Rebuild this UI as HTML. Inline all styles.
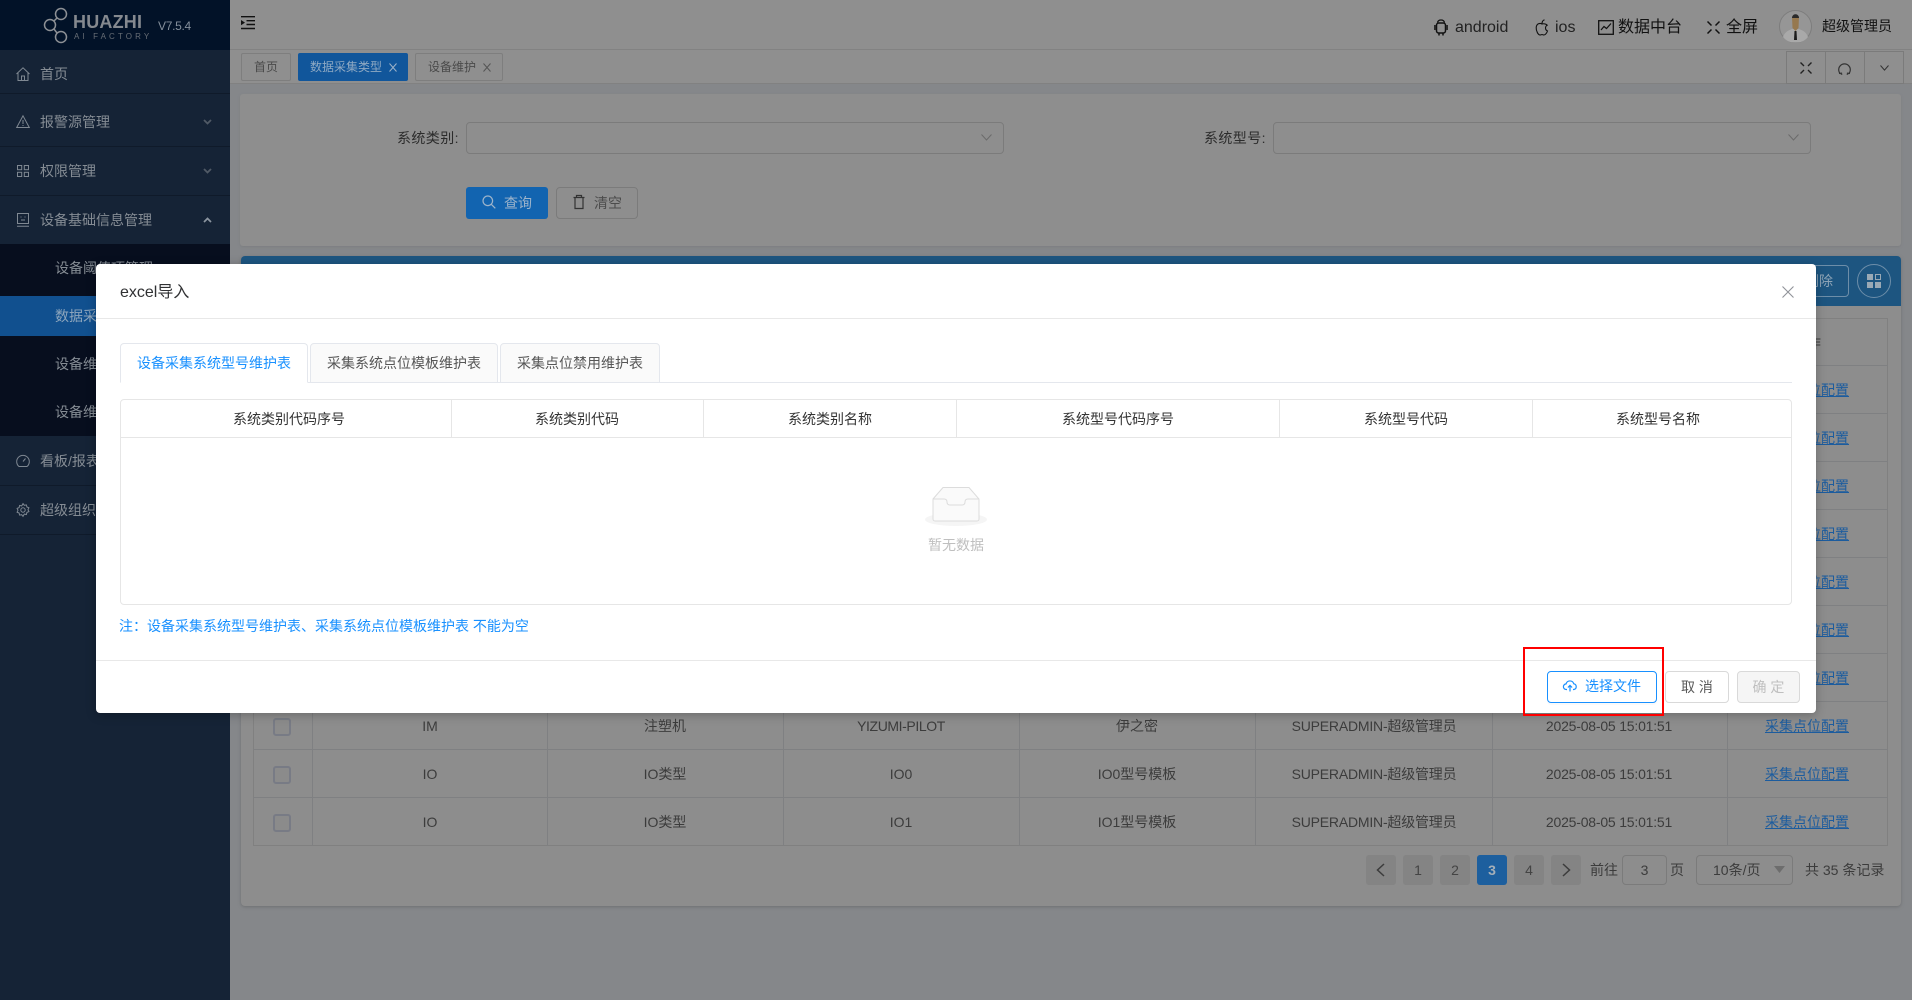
<!DOCTYPE html>
<html lang="zh"><head><meta charset="utf-8"><title>excel导入</title>
<style>
*{box-sizing:border-box}
html,body{margin:0;padding:0;width:1912px;height:1000px;overflow:hidden;background:#85878a;font-family:"Liberation Sans","Noto Sans CJK SC",sans-serif;font-size:14px;color:#3c3c3c}
.a{position:absolute}
.t{position:absolute;white-space:nowrap;line-height:20px;height:20px}
.c{text-align:center;transform:translateX(-50%)}
.ln{position:absolute;background:#7f8082}
.mi{color:#858c94}
.link{color:#1c5c9e;text-decoration:underline;text-decoration-thickness:1px}
.cb{position:absolute;left:273px;width:18px;height:18px;border:2px solid #787b85;border-radius:3px;background:#8b8b8b}
.pg{position:absolute;top:855px;width:30px;height:30px;background:#848484;border-radius:3px;text-align:center;line-height:30px;color:#444}
.box{position:absolute;border:1px solid #7b7b7b;border-radius:4px}
.tb{position:absolute;top:53px;height:28px;border:1px solid #7e7e7e;border-radius:2px;font-size:12px;line-height:26px;color:#4a4a4a}
.mt{position:absolute;top:343px;height:40px;border:1px solid #e4e7ed;border-radius:4px 4px 0 0;background:#fafafa;color:#555;text-align:center;line-height:39px}
.th{position:absolute;top:409px;line-height:20px;color:#333;transform:translateX(-50%);white-space:nowrap}
.n{letter-spacing:-.2px}
svg{position:absolute;display:block;overflow:visible}
</style></head><body>

<!-- main area -->
<div class="a" style="left:230px;top:0;width:1682px;height:50px;background:#8f8f8f;border-bottom:1px solid #828282"></div>
<div class="a" style="left:230px;top:50px;width:1682px;height:34px;background:#8f8f8f;border-bottom:1px solid #818181"></div>

<svg style="left:241px;top:16px" width="14" height="14" viewBox="0 0 14 14"><path d="M0 .7h14M5.500 4.700H14M5.500 8.500H14M0 12.500h14" stroke="#111" stroke-width="1.400" fill="none"/><path d="M0 4l4 2.600L0 9.200z" fill="#111"/></svg>

<div class="tb" style="left:241px;width:50px;text-align:center">首页</div>
<div class="tb" style="left:298px;width:110px;background:#11569b;border-color:#11569b;color:#8fa9c3;padding-left:11px">数据采集类型</div>
<svg style="left:389px;top:63px" width="8" height="9" viewBox="0 0 8 9"><path d="M.5.5l7 8M7.500.5l-7 8" stroke="#9db2c8" stroke-width="1" fill="none"/></svg>
<div class="tb" style="left:415px;width:88px;padding-left:12px">设备维护</div>
<svg style="left:483px;top:63px" width="8" height="9" viewBox="0 0 8 9"><path d="M.5.5l7 8M7.500.5l-7 8" stroke="#555" stroke-width="1" fill="none"/></svg>

<div class="a" style="left:1786px;top:51px;width:118px;height:33px;border:1px solid #7b7b7b"></div>
<div class="a" style="left:1825px;top:51px;width:1px;height:33px;background:#7b7b7b"></div>
<div class="a" style="left:1864px;top:51px;width:1px;height:33px;background:#7b7b7b"></div>
<svg style="left:1800px;top:62px" width="12" height="12" viewBox="0 0 12 12"><path d="M.5.5l3.500 3.500M11.500.5L8 4M.5 11.500L4 8M11.500 11.500L8 8" stroke="#222" stroke-width="1.400" fill="none"/></svg>
<svg style="left:1838px;top:62px" width="13" height="13" viewBox="0 0 13 13"><path d="M2.600 12A5.800 5.800 0 1 1 10.400 12" stroke="#333" stroke-width="1.200" fill="none"/><path d="M1 11.500l2.600-.4.2 1.900M12 11.500l-2.600-.4-.2 1.900" stroke="#333" stroke-width="1" fill="none"/></svg>
<svg style="left:1880px;top:65px" width="9" height="6" viewBox="0 0 9 6"><path d="M.5.5l4 4.600 4-4.600" stroke="#333" stroke-width="1" fill="none"/></svg>

<!-- header right -->
<svg style="left:1434px;top:19px" width="14" height="17" viewBox="0 0 14 17"><path d="M3.500 3.500C4 1.600 5.300 1 7 1s3 .6 3.500 2.500" stroke="#111" stroke-width="1.300" fill="none"/><rect x="2.500" y="4" width="9" height="10" rx="2.200" stroke="#111" stroke-width="1.500" fill="none"/><rect x=".2" y="6" width="1.400" height="5" fill="#111"/><rect x="12.400" y="6" width="1.400" height="5" fill="#111"/><path d="M5 14v2.500M9 14v2.500" stroke="#111" stroke-width="1.500"/></svg>
<div class="t" style="left:1455px;top:18px;font-size:16px;color:#222">android</div>
<svg style="left:1535px;top:19px" width="14" height="17" viewBox="0 0 14 17"><path d="M7 5C5 3.800 1.500 4.500 1.200 8.500c-.2 3.500 2 7.500 3.800 7.500 1 0 1.300-.5 2-.5s1 .5 2 .5c1.500 0 3-2.500 3.500-4-2.500-1-2.700-4.500-.3-5.800C11 5 8.800 4.400 7 5z" stroke="#111" stroke-width="1.100" fill="none"/><path d="M7 4.500C7 2.800 8 1.200 9.500.8" stroke="#111" stroke-width="1.200" fill="none"/></svg>
<div class="t" style="left:1555px;top:18px;font-size:16px;color:#222">ios</div>
<svg style="left:1598px;top:20px" width="16" height="15" viewBox="0 0 16 15"><rect x=".7" y=".7" width="14.600" height="13.600" stroke="#111" stroke-width="1.300" fill="none"/><path d="M3 10l3-3.500 2.500 2L13 3.500" stroke="#111" stroke-width="1.200" fill="none"/></svg>
<div class="t" style="left:1618px;top:18px;font-size:16px;color:#111">数据中台</div>
<svg style="left:1707px;top:21px" width="13" height="13" viewBox="0 0 13 13"><path d="M.5.5l4 4M12.500.5l-4 4M.5 12.500l4-4M12.500 12.500l-4-4" stroke="#111" stroke-width="1.500" fill="none"/></svg>
<div class="t" style="left:1726px;top:18px;font-size:16px;color:#111">全屏</div>
<svg style="left:1779px;top:10px" width="33" height="33" viewBox="0 0 33 33"><circle cx="16.500" cy="16.500" r="16" fill="#969696" stroke="#7d7d7d"/><path d="M4 27c2-6 7-7 9-8h7c2 1 7 2 9 8-3 4-7 5.500-12.500 5.500S7 31 4 27z" fill="#a9a9a9"/><path d="M13 7h7l-.5 11-3 3-3-3z" fill="#96784e"/><path d="M13 8c0-5 7-5 7 0z" fill="#2a2a2a"/><path d="M15.500 21h2l.5 9h-3z" fill="#1c1c1c"/></svg>
<div class="t" style="left:1822px;top:16px;color:#111">超级管理员</div>

<!-- search card -->
<div class="a" style="left:240px;top:94px;width:1661px;height:152px;background:#8e8e8e;border-radius:3px;box-shadow:0 1px 2px #7c7e80"></div>
<div class="t" style="left:397px;top:128px;color:#2c2c2c;letter-spacing:.4px">系统类别:</div>
<div class="box" style="left:466px;top:122px;width:538px;height:32px"></div>
<svg style="left:981px;top:134px" width="11" height="7" viewBox="0 0 11 7"><path d="M.5.5l5 5.500 5-5.500" stroke="#6b6b6b" fill="none"/></svg>
<div class="t" style="left:1204px;top:128px;color:#2c2c2c;letter-spacing:.4px">系统型号:</div>
<div class="box" style="left:1273px;top:122px;width:538px;height:32px"></div>
<svg style="left:1788px;top:134px" width="11" height="7" viewBox="0 0 11 7"><path d="M.5.5l5 5.500 5-5.500" stroke="#6b6b6b" fill="none"/></svg>
<div class="a" style="left:466px;top:187px;width:82px;height:32px;background:#1264b0;border-radius:3px"></div>
<svg style="left:482px;top:195px" width="14" height="14" viewBox="0 0 14 14"><circle cx="5.800" cy="5.800" r="4.800" stroke="#9db4cb" stroke-width="1.200" fill="none"/><path d="M9.300 9.300l4 4" stroke="#9db4cb" stroke-width="1.200"/></svg>
<div class="t" style="left:504px;top:193px;color:#9db4cb">查询</div>
<div class="box" style="left:556px;top:187px;width:82px;height:32px"></div>
<svg style="left:573px;top:195px" width="12" height="14" viewBox="0 0 12 14"><path d="M.5 2.500h11M3.500 2.500v-2h5v2M2 2.500v11h8v-11" stroke="#333" stroke-width="1.200" fill="none"/></svg>
<div class="t" style="left:594px;top:193px;color:#4c4c4c">清空</div>

<!-- table card -->
<div class="a" style="left:241px;top:256px;width:1660px;height:650px;background:#8d8d8d;border-radius:4px;box-shadow:0 1px 3px #6e7072"></div>
<div class="a" style="left:241px;top:256px;width:1660px;height:50px;background:#1d5580;border-radius:4px 4px 0 0"></div>
<div class="a" style="left:1780px;top:265px;width:69px;height:32px;border:1px solid #6d8ea9;border-radius:4px"></div>
<div class="t" style="left:1805px;top:271px;color:#8ea4b6">删除</div>
<div class="a" style="left:1857px;top:264px;width:34px;height:34px;border:1px solid #6d8ea9;border-radius:50%"></div>
<svg style="left:1867px;top:274px" width="14" height="14" viewBox="0 0 14 14"><path d="M0 0h6v6H0zM0 8h6v6H0zM8 8h6v6H8z" fill="#9aa9b5"/><path d="M8.500.5h5v5h-5z" fill="none" stroke="#9aa9b5"/></svg>

<div class="a" style="left:253px;top:318px;width:1635px;height:528px;border:1px solid #808080"></div>
<div class="ln" style="left:253px;top:365px;width:1635px;height:1px"></div>
<div class="ln" style="left:253px;top:413px;width:1635px;height:1px"></div>
<div class="ln" style="left:253px;top:461px;width:1635px;height:1px"></div>
<div class="ln" style="left:253px;top:509px;width:1635px;height:1px"></div>
<div class="ln" style="left:253px;top:557px;width:1635px;height:1px"></div>
<div class="ln" style="left:253px;top:605px;width:1635px;height:1px"></div>
<div class="ln" style="left:253px;top:653px;width:1635px;height:1px"></div>
<div class="ln" style="left:253px;top:701px;width:1635px;height:1px"></div>
<div class="ln" style="left:253px;top:749px;width:1635px;height:1px"></div>
<div class="ln" style="left:253px;top:797px;width:1635px;height:1px"></div>
<div class="ln" style="left:312px;top:318px;width:1px;height:528px"></div>
<div class="ln" style="left:547px;top:318px;width:1px;height:528px"></div>
<div class="ln" style="left:783px;top:318px;width:1px;height:528px"></div>
<div class="ln" style="left:1019px;top:318px;width:1px;height:528px"></div>
<div class="ln" style="left:1255px;top:318px;width:1px;height:528px"></div>
<div class="ln" style="left:1492px;top:318px;width:1px;height:528px"></div>
<div class="ln" style="left:1727px;top:318px;width:1px;height:528px"></div>

<div class="t c" style="left:1807px;top:333px">操作</div>
<div class="t c link" style="left:1807px;top:380px">采集点位配置</div>
<div class="t c link" style="left:1807px;top:428px">采集点位配置</div>
<div class="t c link" style="left:1807px;top:476px">采集点位配置</div>
<div class="t c link" style="left:1807px;top:524px">采集点位配置</div>
<div class="t c link" style="left:1807px;top:572px">采集点位配置</div>
<div class="t c link" style="left:1807px;top:620px">采集点位配置</div>
<div class="t c link" style="left:1807px;top:668px">采集点位配置</div>

<div class="cb" style="top:718px"></div>
<div class="t c" style="left:430px;top:716px">IM</div><div class="t c" style="left:665px;top:716px">注塑机</div><div class="t c n" style="left:901px;top:716px;letter-spacing:-.4px">YIZUMI-PILOT</div><div class="t c" style="left:1137px;top:716px">伊之密</div><div class="t c n" style="left:1374px;top:716px">SUPERADMIN-超级管理员</div><div class="t c n" style="left:1609px;top:716px">2025-08-05 15:01:51</div><div class="t c link" style="left:1807px;top:716px">采集点位配置</div>
<div class="cb" style="top:766px"></div>
<div class="t c" style="left:430px;top:764px">IO</div><div class="t c" style="left:665px;top:764px">IO类型</div><div class="t c" style="left:901px;top:764px">IO0</div><div class="t c" style="left:1137px;top:764px">IO0型号模板</div><div class="t c n" style="left:1374px;top:764px">SUPERADMIN-超级管理员</div><div class="t c n" style="left:1609px;top:764px">2025-08-05 15:01:51</div><div class="t c link" style="left:1807px;top:764px">采集点位配置</div>
<div class="cb" style="top:814px"></div>
<div class="t c" style="left:430px;top:812px">IO</div><div class="t c" style="left:665px;top:812px">IO类型</div><div class="t c" style="left:901px;top:812px">IO1</div><div class="t c" style="left:1137px;top:812px">IO1型号模板</div><div class="t c n" style="left:1374px;top:812px">SUPERADMIN-超级管理员</div><div class="t c n" style="left:1609px;top:812px">2025-08-05 15:01:51</div><div class="t c link" style="left:1807px;top:812px">采集点位配置</div>

<!-- pagination -->
<div class="pg" style="left:1366px"></div>
<svg style="left:1376px;top:863px" width="9" height="14" viewBox="0 0 9 14"><path d="M8 1L1.500 7 8 13" stroke="#3c3c3c" stroke-width="1.500" fill="none"/></svg>
<div class="pg" style="left:1403px">1</div>
<div class="pg" style="left:1440px">2</div>
<div class="pg" style="left:1477px;background:#1d5f9e;color:#a5afb8;font-weight:bold">3</div>
<div class="pg" style="left:1514px">4</div>
<div class="pg" style="left:1551px"></div>
<svg style="left:1562px;top:863px" width="9" height="14" viewBox="0 0 9 14"><path d="M1 1l6.500 6L1 13" stroke="#3c3c3c" stroke-width="1.500" fill="none"/></svg>
<div class="t" style="left:1590px;top:860px">前往</div>
<div class="box" style="left:1622px;top:855px;width:45px;height:30px;text-align:center;line-height:28px">3</div>
<div class="t" style="left:1670px;top:860px">页</div>
<div class="box" style="left:1696px;top:855px;width:97px;height:30px;line-height:28px;padding-left:16px">10条/页</div>
<svg style="left:1774px;top:866px" width="11" height="7" viewBox="0 0 11 7"><path d="M0 0h11L5.500 7z" fill="#6d6d6d"/></svg>
<div class="t" style="left:1805px;top:860px">共 35 条记录</div>

<!-- sidebar -->
<div class="a" style="left:0;top:0;width:230px;height:1000px;background:#152336"></div>
<div class="a" style="left:0;top:0;width:230px;height:50px;background:#021228"></div>
<svg style="left:42px;top:6px" width="30" height="40" viewBox="0 0 30 40"><g fill="none" stroke="#8d9095" stroke-width="1.500"><circle cx="19" cy="8" r="5.500"/><circle cx="8" cy="19" r="5.500"/><circle cx="19" cy="31" r="5.500"/><path d="M15 12l-3 3M12 23l3 4"/></g></svg>
<div class="t" style="left:73px;top:12px;font-size:18px;font-weight:bold;color:#85898f;letter-spacing:.2px">HUAZHI</div>
<div class="t" style="left:74px;top:27px;font-size:8px;color:#686e76;letter-spacing:3.100px">AI FACTORY</div>
<div class="t" style="left:158px;top:16px;font-size:12px;color:#858f9b;letter-spacing:-.3px">V7.5.4</div>

<div class="a" style="left:0;top:93px;width:230px;height:1px;background:#0f1a2a"></div>
<div class="a" style="left:0;top:146px;width:230px;height:1px;background:#0f1a2a"></div>
<div class="a" style="left:0;top:195px;width:230px;height:1px;background:#0f1a2a"></div>
<div class="a" style="left:0;top:244px;width:230px;height:192px;background:#070e1e"></div>
<div class="a" style="left:0;top:296px;width:230px;height:40px;background:#11508f"></div>
<div class="a" style="left:0;top:485px;width:230px;height:1px;background:#0f1a2a"></div>
<div class="a" style="left:0;top:534px;width:230px;height:1px;background:#0f1a2a"></div>

<svg style="left:16px;top:67px" width="14" height="14" viewBox="0 0 14 14"><path d="M.5 7L7 .8 13.500 7M2 6v7.500h10V6M5.500 13.500V9h3v4.500" stroke="#7f8892" fill="none"/></svg>
<div class="t mi" style="left:40px;top:64px">首页</div>
<svg style="left:16px;top:115px" width="14" height="13" viewBox="0 0 14 13"><path d="M7 .8l6.300 11.700H.7zM7 5v4M7 10v1" stroke="#7f8892" fill="none"/></svg>
<div class="t mi" style="left:40px;top:112px">报警源管理</div>
<svg style="left:203px;top:119px" width="9" height="6" viewBox="0 0 9 6"><path d="M1 1l3.500 3.500L8 1" stroke="#505a66" stroke-width="1.800" fill="none"/></svg>
<svg style="left:17px;top:165px" width="12" height="12" viewBox="0 0 12 12"><g fill="none" stroke="#7f8892"><rect x=".5" y=".5" width="4.200" height="4.200"/><rect x="7.300" y=".5" width="4.200" height="4.200"/><rect x=".5" y="7.300" width="4.200" height="4.200"/><rect x="7.300" y="7.300" width="4.200" height="4.200"/></g></svg>
<div class="t mi" style="left:40px;top:161px">权限管理</div>
<svg style="left:203px;top:168px" width="9" height="6" viewBox="0 0 9 6"><path d="M1 1l3.500 3.500L8 1" stroke="#505a66" stroke-width="1.800" fill="none"/></svg>
<svg style="left:17px;top:213px" width="12" height="14" viewBox="0 0 12 14"><path d="M.5.5h11v10H.5zM0 13.300h12M4 3.500v1M8 3.500v1M4 7h4" stroke="#7f8892" fill="none"/></svg>
<div class="t mi" style="left:40px;top:210px">设备基础信息管理</div>
<svg style="left:203px;top:217px" width="9" height="6" viewBox="0 0 9 6"><path d="M1 5l3.500-3.500L8 5" stroke="#8c95a0" stroke-width="1.700" fill="none"/></svg>
<div class="t mi" style="left:55px;top:258px">设备阈值项管理</div>
<div class="t" style="left:55px;top:306px;color:#8ea6bd">数据采集类型</div>
<div class="t mi" style="left:55px;top:354px">设备维护</div>
<div class="t mi" style="left:55px;top:402px">设备维修</div>
<svg style="left:16px;top:454px" width="14" height="14" viewBox="0 0 14 14"><path d="M3 12.500A6.300 6.300 0 1 1 11 12.500zM7 7.500L9.500 4.500" stroke="#7f8892" fill="none"/></svg>
<div class="t mi" style="left:40px;top:451px">看板/报表</div>
<svg style="left:16px;top:503px" width="14" height="14" viewBox="0 0 14 14"><path d="M7 .6l1.300 1.700 2.100-.4.500 2.100 2 .8-.9 1.900.9 1.900-2 .8-.5 2.100-2.100-.4L7 13.400l-1.300-1.700-2.100.4-.5-2.100-2-.8.9-1.900-.9-1.900 2-.8.5-2.100 2.100.4z" stroke="#7f8892" fill="none"/><circle cx="7" cy="7" r="2.200" stroke="#7f8892" fill="none"/></svg>
<div class="t mi" style="left:40px;top:500px">超级组织</div>

<!-- modal -->
<div class="a" style="left:96px;top:264px;width:1720px;height:449px;background:#fff;border-radius:4px;box-shadow:0 2px 10px rgba(0,0,0,.25)"></div>
<div class="t" style="left:120px;top:283px;font-size:16px;color:#303133">excel导入</div>
<svg style="left:1782px;top:286px" width="12" height="12" viewBox="0 0 12 12"><path d="M.5.5l11 11M11.500.5l-11 11" stroke="#909399" stroke-width="1.100" fill="none"/></svg>
<div class="a" style="left:96px;top:318px;width:1720px;height:1px;background:#e8e8e8"></div>

<div class="a" style="left:120px;top:382px;width:1672px;height:1px;background:#e4e7ed"></div>
<div class="mt" style="left:120px;width:188px;background:#fff;border-bottom-color:#fff;color:#1890ff">设备采集系统型号维护表</div>
<div class="mt" style="left:310px;width:188px">采集系统点位模板维护表</div>
<div class="mt" style="left:500px;width:160px">采集点位禁用维护表</div>

<div class="a" style="left:120px;top:399px;width:1672px;height:206px;border:1px solid #e6e6e6;border-radius:4px"></div>
<div class="a" style="left:120px;top:437px;width:1672px;height:1px;background:#e6e6e6"></div>
<div class="a" style="left:451px;top:399px;width:1px;height:38px;background:#e6e6e6"></div>
<div class="a" style="left:703px;top:399px;width:1px;height:38px;background:#e6e6e6"></div>
<div class="a" style="left:956px;top:399px;width:1px;height:38px;background:#e6e6e6"></div>
<div class="a" style="left:1279px;top:399px;width:1px;height:38px;background:#e6e6e6"></div>
<div class="a" style="left:1532px;top:399px;width:1px;height:38px;background:#e6e6e6"></div>
<div class="th" style="left:289px">系统类别代码序号</div>
<div class="th" style="left:577px">系统类别代码</div>
<div class="th" style="left:830px">系统类别名称</div>
<div class="th" style="left:1118px">系统型号代码序号</div>
<div class="th" style="left:1406px">系统型号代码</div>
<div class="th" style="left:1658px">系统型号名称</div>

<svg style="left:925px;top:486px" width="62" height="42" viewBox="0 0 62 42"><ellipse cx="31" cy="33.500" rx="31" ry="6.500" fill="#f5f5f5"/><path d="M8 13L18 1.500h26L54 13v20a2 2 0 0 1-2 2H10a2 2 0 0 1-2-2z" fill="#fafafa" stroke="#dcdcdc" stroke-width="1"/><path d="M8 13h11c2 0 3 1 3 3s1 3 3 3h12c2 0 3-1 3-3s1-3 3-3h11" fill="none" stroke="#dcdcdc" stroke-width="1"/></svg>
<div class="t c" style="left:956px;top:535px;color:#bfbfbf">暂无数据</div>

<div class="t" style="left:119px;top:616px;color:#1890ff">注：设备采集系统型号维护表、采集系统点位模板维护表 不能为空</div>

<div class="a" style="left:96px;top:660px;width:1720px;height:1px;background:#e8e8e8"></div>
<div class="a" style="left:1547px;top:671px;width:110px;height:32px;border:1px solid #1890ff;border-radius:4px;box-shadow:0 2px 0 rgba(0,0,0,.02)"></div>
<svg style="left:1563px;top:680px" width="14" height="12" viewBox="0 0 14 12"><path d="M4 9.500H3.300a2.800 2.800 0 0 1-.2-5.600A4 4 0 0 1 10.800 3.800a2.900 2.900 0 0 1 .1 5.700H10" stroke="#1890ff" stroke-width="1.200" fill="none"/><path d="M7 11.500V5.500M4.900 7.500L7 5.400l2.100 2.100" stroke="#1890ff" stroke-width="1.200" fill="none"/></svg>
<div class="t" style="left:1585px;top:676px;color:#1890ff">选择文件</div>
<div class="a" style="left:1665px;top:671px;width:64px;height:32px;border:1px solid #d9d9d9;border-radius:4px;text-align:center;line-height:30px;color:#595959">取 消</div>
<div class="a" style="left:1737px;top:671px;width:63px;height:32px;border:1px solid #d9d9d9;border-radius:4px;background:#f5f5f5;text-align:center;line-height:30px;color:#bfbfbf">确 定</div>

<div class="a" style="left:1523px;top:647px;width:141px;height:69px;border:2px solid #f00"></div>

</body></html>
